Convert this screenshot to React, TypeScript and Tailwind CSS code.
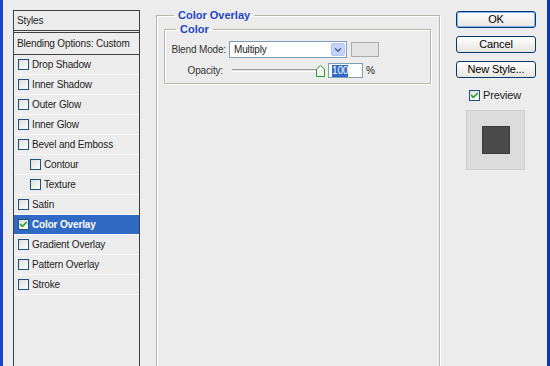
import { Check, ChevronDown } from 'lucide-react';

const styleItems = [
  { label: 'Drop Shadow' },
  { label: 'Inner Shadow' },
  { label: 'Outer Glow' },
  { label: 'Inner Glow' },
  { label: 'Bevel and Emboss' },
  { label: 'Contour', indent: true },
  { label: 'Texture', indent: true },
  { label: 'Satin' },
  { label: 'Color Overlay', checked: true, active: true },
  { label: 'Gradient Overlay' },
  { label: 'Pattern Overlay' },
  { label: 'Stroke' },
];

function XpCheckbox({ checked }: { checked?: boolean }) {
  return (
    <span className="w-[11px] h-[11px] shrink-0 border border-[#1c5180] bg-gradient-to-br from-[#dcdcd6] to-white flex items-center justify-center">
      {checked && <Check className="w-[9px] h-[9px] text-[#21a121]" strokeWidth={4} />}
    </span>
  );
}

function XpButton({ label, isDefault }: { label: string; isDefault?: boolean }) {
  return (
    <button
      className={`h-[17px] w-[80px] rounded-[3px] border border-[#003c74] bg-gradient-to-b from-white to-[#e6e5df] text-[11px] leading-none text-black ${
        isDefault ? 'shadow-[inset_0_0_0_1px_#8aaef0]' : ''
      }`}
    >
      {label}
    </button>
  );
}

export default function App() {
  return (
    <div className="w-[550px] h-[366px] overflow-hidden flex bg-[#ececec] text-[10px] tracking-[-0.15px] whitespace-nowrap text-[#222] font-['Liberation_Sans',Arial,sans-serif]">
      <div className="w-[3px] shrink-0 bg-[#1a45c9]" />

      <div className="flex-1 flex pl-[10px]">
        {/* styles list */}
        <div className="mt-[10px] w-[127px] h-[400px] shrink-0 border border-[#404040] flex flex-col">
          <div className="h-[22px] shrink-0 border-b-[3px] border-double border-[#404040] flex items-center pl-[3px]">Styles</div>
          <div className="h-[22px] shrink-0 border-b border-[#404040] flex items-center pl-[3px]">Blending Options: Custom</div>
          {styleItems.map((item) => (
            <div
              key={item.label}
              className={`h-[20px] shrink-0 border-b border-[#fafafa] flex items-center gap-[3px] ${item.indent ? 'pl-[16px]' : 'pl-[4px]'} ${
                item.active ? 'bg-[#316ac5] text-white font-bold' : ''
              }`}
            >
              <XpCheckbox checked={item.checked} />
              <span>{item.label}</span>
            </div>
          ))}
        </div>

        {/* settings */}
        <fieldset className="ml-[16px] mt-[8px] w-[284px] h-[420px] shrink-0 border border-[#b8b6ad] shadow-[1px_1px_0_#fff,inset_1px_1px_0_#fff] px-[7px]">
          <legend className="ml-[10px] px-[4px] font-bold text-[11px] text-[#2146c4] leading-[14px] tracking-normal">Color Overlay</legend>
          <fieldset className="w-[267px] h-[62px] border border-[#b8b6ad] shadow-[1px_1px_0_#fff,inset_1px_1px_0_#fff]">
            <legend className="ml-[11px] px-[4px] font-bold text-[11px] text-[#2146c4] leading-[14px] tracking-normal">Color</legend>
            <div className="flex items-center mt-[5px]">
              <span className="w-[63px] text-right pr-[2px] text-[#333]">Blend Mode:</span>
              <div className="ml-[1px] w-[118px] h-[17px] border border-[#7f9db9] bg-white flex items-center justify-between pl-[4px] pr-[1px]">
                <span>Multiply</span>
                <span className="w-[14px] h-[13px] rounded-[2px] bg-[#c3d3fd] border border-[#b1c3f2] flex items-center justify-center">
                  <ChevronDown className="w-[10px] h-[10px] text-[#4d6185]" strokeWidth={3.5} />
                </span>
              </div>
              <div className="ml-[4px] w-[28px] h-[15px] border border-[#aaa] bg-[#e4e4e4]" />
            </div>
            <div className="flex items-center mt-[5px]">
              <span className="w-[60px] text-right pr-[2px] text-[#333]">Opacity:</span>
              <div className="ml-[7px] relative w-[93px] h-[14px] flex items-center">
                <div className="w-[88px] h-[3px] border-t border-[#a0a0a0] border-b border-b-white bg-[#dcdcdc]" />
                <svg className="absolute right-0 top-[1px]" width="9" height="12" viewBox="0 0 9 12">
                  <path d="M0.5 11.5 V4 L4.5 0.5 L8.5 4 V11.5 Z" fill="#f4f4f0" stroke="#21a121" />
                </svg>
              </div>
              <div className="ml-[3px] w-[35px] h-[15px] border border-[#7f9db9] bg-white flex items-center pl-[3px]">
                <span className="bg-[#316ac5] text-white leading-[12px]">100</span>
              </div>
              <span className="ml-[3px]">%</span>
            </div>
          </fieldset>
        </fieldset>

        {/* buttons */}
        <div className="ml-[16px] mt-[11px] w-[80px] shrink-0 flex flex-col">
          <XpButton label="OK" isDefault />
          <div className="mt-[8px]">
            <XpButton label="Cancel" />
          </div>
          <div className="mt-[8px]">
            <XpButton label="New Style..." />
          </div>
          <div className="mt-[9px] flex items-center gap-[3px] pl-[13px] text-[11px]">
            <XpCheckbox checked />
            <span>Preview</span>
          </div>
          <div className="mt-[6px] ml-[10px] w-[59px] h-[60px] bg-[#dcdcdc] border border-[#cfcfcf] flex items-center justify-center">
            <div className="w-[28px] h-[28px] bg-[#4a4a4a] border border-[#3a3a3a]" />
          </div>
        </div>
      </div>

      <div className="w-[3px] shrink-0 bg-[#0d35b8]" />
    </div>
  );
}
